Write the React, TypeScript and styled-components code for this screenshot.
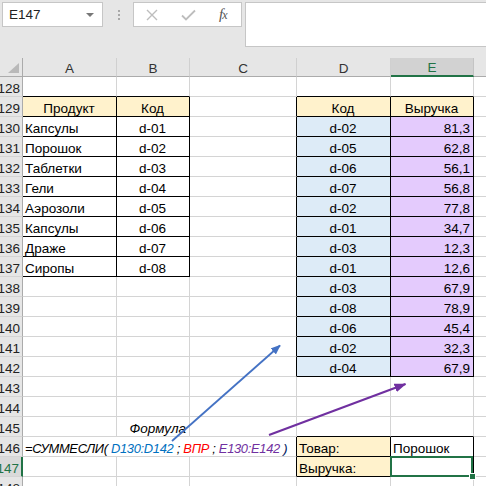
import React from 'react';
import styled, { createGlobalStyle } from 'styled-components';

const GlobalStyle = createGlobalStyle`
  html, body {
    margin: 0;
    padding: 0;
    background: #ffffff;
    overflow: hidden;
  }
  body {
    font-family: "Liberation Sans", Arial, sans-serif;
  }
`;

const GRID = '#d4d4d4';
const HEAD_LINE = '#ababab';
const GREEN = '#217346';

const Page = styled.div`
  position: relative;
  width: 486px;
  height: 486px;
  overflow: hidden;
  background: #ffffff;
`;

// ---------- formula bar ----------

const TopBar = styled.div`
  display: flex;
  align-items: flex-start;
  height: 58px;
  padding: 2px 0 0 2px;
  box-sizing: border-box;
  background: #e6e6e6;
`;

const NameBox = styled.div`
  display: flex;
  align-items: center;
  justify-content: space-between;
  width: 101px;
  height: 25px;
  box-sizing: border-box;
  padding: 0 6px 0 6px;
  background: #ffffff;
  border: 1px solid #c6c6c6;
  font-size: 13.5px;
  color: #222;
`;

const DropArrow = styled.span`
  width: 0;
  height: 0;
  border-left: 4px solid transparent;
  border-right: 4px solid transparent;
  border-top: 4px solid #777;
  margin-right: 2px;
`;

const Grip = styled.div`
  display: flex;
  flex-direction: column;
  gap: 2px;
  margin: 8px 13px 0 15px;
`;

const GripDot = styled.span`
  width: 2px;
  height: 2px;
  background: #a8a8a8;
`;

const FxBox = styled.div`
  display: flex;
  align-items: center;
  width: 109px;
  height: 25px;
  box-sizing: border-box;
  padding: 0 0 0 12px;
  gap: 23px;
  background: #ffffff;
  border: 1px solid #c6c6c6;
`;

const FxLabel = styled.span`
  font-family: "Liberation Serif", "Times New Roman", serif;
  font-style: italic;
  font-size: 15px;
  color: #555;
  letter-spacing: -1px;
`;

const FxSub = styled.span`
  font-size: 12px;
`;

const FormulaInput = styled.div`
  flex: 1;
  height: 45px;
  margin-left: 3px;
  margin-right: -2px;
  box-sizing: border-box;
  background: #ffffff;
  border: 1px solid #c6c6c6;
`;

// ---------- sheet ----------

const Sheet = styled.div`
  display: grid;
  grid-template-columns: 23px 94px 73px 107px 94px 83px 64px;
  grid-template-rows: 19px;
  grid-auto-rows: 20px;
  font-size: 13.5px;
`;

const Corner = styled.div`
  position: relative;
  background: #e6e6e6;
  border-right: 1px solid ${HEAD_LINE};
  border-bottom: 1px solid ${HEAD_LINE};
  box-sizing: border-box;

  &::after {
    content: '';
    position: absolute;
    right: 3px;
    bottom: 3px;
    width: 0;
    height: 0;
    border-left: 11px solid transparent;
    border-bottom: 10px solid #b9b9b9;
  }
`;

const ColHead = styled.div<{ $active?: boolean }>`
  display: flex;
  align-items: flex-end;
  justify-content: center;
  box-sizing: border-box;
  background: ${(p) => (p.$active ? '#d2d2d2' : '#e6e6e6')};
  color: ${(p) => (p.$active ? GREEN : '#333')};
  border-right: 1px solid ${(p) => (p.$active ? '#c4c4c4' : '#d0d0d0')};
  border-bottom: ${(p) => (p.$active ? `2px solid ${GREEN}` : `1px solid ${HEAD_LINE}`)};
`;

const RowHead = styled.div<{ $active?: boolean }>`
  display: flex;
  align-items: flex-end;
  justify-content: flex-end;
  overflow: hidden;
  white-space: nowrap;
  box-sizing: border-box;
  padding-right: 2px;
  background: ${(p) => (p.$active ? '#dadada' : '#e6e6e6')};
  color: ${(p) => (p.$active ? GREEN : '#222')};
  border-right: ${(p) => (p.$active ? `2px solid ${GREEN}` : `1px solid ${HEAD_LINE}`)};
  border-bottom: 1px solid ${GRID};
`;

type Align = 'left' | 'center' | 'right';

const Cell = styled.div<{
  $align: Align;
  $fill: string;
  $right: string;
  $bottom: string;
  $italic?: boolean;
  $span?: number;
  $selected?: boolean;
}>`
  position: relative;
  display: flex;
  align-items: flex-end;
  justify-content: ${(p) =>
    p.$align === 'left' ? 'flex-start' : p.$align === 'right' ? 'flex-end' : 'center'};
  grid-column: ${(p) => (p.$span ? `span ${p.$span}` : 'auto')};
  box-sizing: border-box;
  padding: 0 3px 0 2px;
  white-space: nowrap;
  background: ${(p) => p.$fill};
  color: #000;
  font-style: ${(p) => (p.$italic ? 'italic' : 'normal')};
  border-right: 1px solid ${(p) => p.$right};
  border-bottom: 1px solid ${(p) => p.$bottom};

  ${(p) =>
    p.$selected &&
    `
    &::after {
      content: '';
      position: absolute;
      top: -1px;
      left: -1px;
      right: 0;
      bottom: -1px;
      border: 2px solid ${GREEN};
      z-index: 2;
    }
    &::before {
      content: '';
      position: absolute;
      right: -3px;
      bottom: -4px;
      width: 5px;
      height: 5px;
      background: ${GREEN};
      border: 1px solid #ffffff;
      z-index: 3;
    }
  `}
`;

const FormulaText = styled.span`
  font-size: 12.9px;
  letter-spacing: -0.3px;
`;

const Part = styled.span<{ $color: string }>`
  color: ${(p) => p.$color};
  white-space: pre;
`;

const Arrows = styled.svg`
  position: absolute;
  left: 0;
  top: 0;
  pointer-events: none;
  z-index: 5;
`;

// ---------- data ----------

const COLS = ['A', 'B', 'C', 'D', 'E', 'F'];
const ROWS = Array.from({ length: 21 }, (_, i) => 128 + i);

const YELLOW = '#fff2cc';
const BLUE = '#ddebf7';
const LILAC = '#e4cbfd';

type Spec = {
  text?: React.ReactNode;
  align?: Align;
  fill?: string;
  italic?: boolean;
  span?: number;
  selected?: boolean;
};

const products = ['Капсулы', 'Порошок', 'Таблетки', 'Гели', 'Аэрозоли', 'Капсулы', 'Драже', 'Сиропы'];
const sales: [string, string][] = [
  ['d-02', '81,3'],
  ['d-05', '62,8'],
  ['d-06', '56,1'],
  ['d-07', '56,8'],
  ['d-02', '77,8'],
  ['d-01', '34,7'],
  ['d-03', '12,3'],
  ['d-01', '12,6'],
  ['d-03', '67,9'],
  ['d-08', '78,9'],
  ['d-06', '45,4'],
  ['d-02', '32,3'],
  ['d-04', '67,9'],
];

const formula = (
  <FormulaText>
    <Part $color="#000">=СУММЕСЛИ( </Part>
    <Part $color="#0070c0">D130:D142</Part>
    <Part $color="#000"> ; </Part>
    <Part $color="#ff0000">ВПР</Part>
    <Part $color="#000"> ; </Part>
    <Part $color="#7030a0">E130:E142</Part>
    <Part $color="#002060"> )</Part>
  </FormulaText>
);

const cells: Record<string, Spec> = {
  A129: { text: 'Продукт', align: 'center', fill: YELLOW },
  B129: { text: 'Код', align: 'center', fill: YELLOW },
  D129: { text: 'Код', align: 'center', fill: YELLOW },
  E129: { text: 'Выручка', align: 'center', fill: YELLOW },
  B145: { text: 'Формула', align: 'right', italic: true },
  A146: { text: formula, align: 'left', italic: true, span: 3 },
  D146: { text: 'Товар:', fill: YELLOW },
  E146: { text: 'Порошок' },
  D147: { text: 'Выручка:', fill: YELLOW },
  E147: { selected: true },
};

products.forEach((name, i) => {
  cells[`A${130 + i}`] = { text: name };
  cells[`B${130 + i}`] = { text: `d-0${i + 1}`, align: 'center' };
});

sales.forEach(([code, value], i) => {
  cells[`D${130 + i}`] = { text: code, align: 'center', fill: BLUE };
  cells[`E${130 + i}`] = { text: value, align: 'right', fill: LILAC };
});

const bordered = [
  { r1: 129, r2: 137, c1: 0, c2: 1 },
  { r1: 129, r2: 142, c1: 3, c2: 4 },
  { r1: 146, r2: 147, c1: 3, c2: 4 },
];

const inTable = (r: number, c: number) =>
  bordered.some((b) => r >= b.r1 && r <= b.r2 && c >= b.c1 && c <= b.c2);

const covered = new Set(['B146', 'C146']);

const App = () => {
  return (
    <Page>
      <GlobalStyle />
      <TopBar>
        <NameBox>
          E147
          <DropArrow />
        </NameBox>
        <Grip>
          <GripDot />
          <GripDot />
          <GripDot />
        </Grip>
        <FxBox>
          <svg width="12" height="12" viewBox="0 0 12 12">
            <path d="M1 1 L11 11 M11 1 L1 11" stroke="#bdbdbd" strokeWidth="1.4" fill="none" />
          </svg>
          <svg width="15" height="12" viewBox="0 0 15 12">
            <path d="M1 6.5 L5 10.5 L14 1.5" stroke="#bdbdbd" strokeWidth="1.8" fill="none" />
          </svg>
          <FxLabel>
            f<FxSub>x</FxSub>
          </FxLabel>
        </FxBox>
        <FormulaInput />
      </TopBar>

      <Sheet>
        <Corner />
        {COLS.map((c) => (
          <ColHead key={c} $active={c === 'E'}>
            {c}
          </ColHead>
        ))}
        {ROWS.map((r) => (
          <React.Fragment key={r}>
            <RowHead $active={r === 147}>{r}</RowHead>
            {COLS.map((c, ci) => {
              const id = `${c}${r}`;
              if (covered.has(id)) return null;
              const spec = cells[id] || {};
              const last = ci + (spec.span || 1) - 1;
              const right = inTable(r, last) || inTable(r, last + 1) ? '#000' : GRID;
              const bottom = inTable(r, ci) || inTable(r + 1, ci) ? '#000' : GRID;
              return (
                <Cell
                  key={id}
                  $align={spec.align || 'left'}
                  $fill={spec.fill || '#ffffff'}
                  $right={right}
                  $bottom={bottom}
                  $italic={spec.italic}
                  $span={spec.span}
                  $selected={spec.selected}
                >
                  {spec.text}
                </Cell>
              );
            })}
          </React.Fragment>
        ))}
      </Sheet>

      <Arrows width="486" height="486" viewBox="0 0 486 486">
        <defs>
          <marker id="headBlue" markerWidth="10" markerHeight="8" refX="9" refY="4" orient="auto" markerUnits="userSpaceOnUse">
            <path d="M0 0 L10 4 L0 8 Z" fill="#4472c4" />
          </marker>
          <marker id="headPurple" markerWidth="12" markerHeight="9" refX="11" refY="4.5" orient="auto" markerUnits="userSpaceOnUse">
            <path d="M0 0 L12 4.5 L0 9 Z" fill="#7030a0" />
          </marker>
        </defs>
        <line x1="172" y1="441" x2="280" y2="345.5" stroke="#4472c4" strokeWidth="1.8" markerEnd="url(#headBlue)" />
        <line x1="269" y1="435" x2="405.5" y2="384" stroke="#7030a0" strokeWidth="2.2" markerEnd="url(#headPurple)" />
      </Arrows>
    </Page>
  );
};

export default App;
